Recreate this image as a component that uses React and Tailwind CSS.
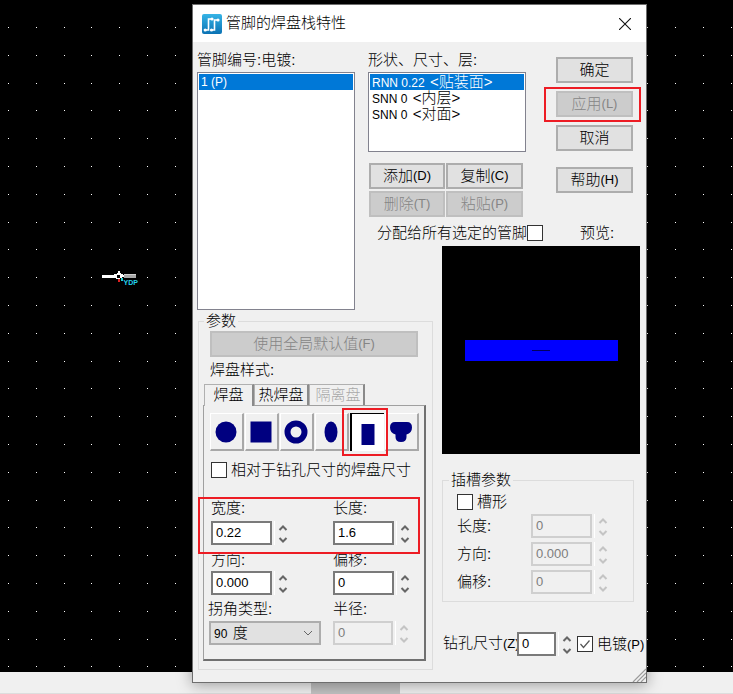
import React from "react";

const xs = Array.from({ length: 27 }, (_, i) => Math.round(8 + 27.8 * i));
const ys = Array.from({ length: 24 }, (_, i) => Math.round(27 + 27.8 * i));

function Dots() {
  return (
    <svg className="absolute inset-0" width="733" height="672" shapeRendering="crispEdges">
      {xs.map((x) => ys.map((y) => <rect key={x + "-" + y} x={x} y={y} width="1" height="1" fill="#fff" />))}
    </svg>
  );
}

function Cursor() {
  return (
    <svg className="absolute left-[100px] top-[266px]" width="40" height="22" shapeRendering="crispEdges">
      <rect x="2" y="9" width="14" height="3" fill="#fff" />
      <path d="M12 9 L18 7 L19 3 L20 7 L24 9 L24 11 L20 12 L19 17 L18 13 L14 12 Z" fill="#fff" />
      <rect x="17" y="9" width="3" height="3" fill="#000" />
      <rect x="24" y="8" width="12" height="1" fill="#d0d0d0" />
      <rect x="24" y="9" width="12" height="3" fill="#a8a8a8" />
      <rect x="18" y="13" width="2" height="3" fill="#e02020" />
      <rect x="21" y="12" width="2" height="3" fill="#20d0d0" />
      <text x="23.5" y="18.5" fontSize="7" fontWeight="700" fill="#22d3ee" fontFamily="Liberation Sans, sans-serif">YDP</text>
    </svg>
  );
}

function Btn({ children, disabled, className = "" }) {
  return (
    <div
      className={
        "flex items-center justify-center h-[26px] border-2 text-[15px] " +
        (disabled
          ? "bg-[#cccccc] border-[#bfbfbf] text-[#858585] "
          : "bg-[#e1e1e1] border-[#adadad] text-black ") +
        className
      }
    >
      {children}
    </div>
  );
}

const Key = ({ children }) => <span className="text-[13px]">{children}</span>;

function Spin({ disabled, tight }) {
  const c = disabled ? "#c4c4c4" : "#666666";
  return (
    <div className="flex h-[24px] ml-[2px]">
      <div className="w-px h-full bg-white" />
      <svg width={tight ? 14 : 16} height="24" className="block">
        <path d="M4.5 9 L8 5.5 L11.5 9" fill="none" stroke={c} strokeWidth="2" />
        <path d="M4.5 17 L8 20.5 L11.5 17" fill="none" stroke={c} strokeWidth="2" />
      </svg>
    </div>
  );
}

function Field({ value, w = "w-[61px]", disabled, tight }) {
  return (
    <div className="flex items-center">
      <div
        className={
          "h-[24px] flex items-center pl-[3px] text-[13px] border-2 " +
          w +
          (disabled
            ? " bg-[#f0f0f0] border-[#cfcfcf] text-[#7d7d7d]"
            : " bg-white border-[#7a7a7a] text-black")
        }
      >
        {value}
      </div>
      <Spin disabled={disabled} tight={tight} />
    </div>
  );
}

function Check({ checked }) {
  return (
    <div className="w-[16px] h-[16px] shrink-0 bg-white border border-[#333333] flex items-center justify-center">
      {checked && (
        <svg width="12" height="12">
          <path d="M1.5 6 L4.5 9.5 L10.5 2.5" fill="none" stroke="#555" strokeWidth="1.2" />
        </svg>
      )}
    </div>
  );
}

function Group({ label, className = "", labelLeft = "left-[6px]", children }) {
  return (
    <div className={"relative border border-[#dcdcdc] " + className}>
      <span className={"absolute -top-[11px] h-[20px] leading-[20px] px-[2px] bg-[#f0f0f0] text-[15px] " + labelLeft}>{label}</span>
      {children}
    </div>
  );
}

function PadBtn({ children, selected }) {
  return (
    <div
      className={
        "w-[34px] h-[38px] flex items-center justify-center " +
        (selected
          ? "bg-white border-t border-l-2 border-black"
          : "bg-[#f0f0f0] border-t border-l border-white border-r-2 border-b-2 border-r-[#a8a8a8] border-b-[#a8a8a8]")
      }
    >
      <svg width="26" height="26" viewBox="0 0 26 26" className={selected ? "" : "mr-[2px]"}>{children}</svg>
    </div>
  );
}

const N = "#000080";

function ListRow({ selected, children }) {
  return (
    <div className={"h-[16px] leading-[16px] pl-[2px] text-[12px] whitespace-nowrap " + (selected ? "bg-[#0078d7] text-white" : "text-black")}>
      {children}
    </div>
  );
}

const Z = ({ children }) => <span className="text-[15px] ml-[2px]">{children}</span>;

function TitleIcon() {
  return (
    <svg width="20" height="20" viewBox="0 0 20 20" className="shrink-0">
      <defs>
        <linearGradient id="g" x1="0" y1="0" x2="0" y2="1">
          <stop offset="0" stopColor="#36b4e6" />
          <stop offset="1" stopColor="#0b72b4" />
        </linearGradient>
      </defs>
      <rect width="20" height="20" rx="2" fill="url(#g)" />
      <path d="M3 16 H6.5 V5 H10" fill="none" stroke="#fff" strokeWidth="1.6" />
      <path d="M9.5 16 H12.5 V6 H16" fill="none" stroke="#fff" strokeWidth="1.6" />
      <circle cx="3.2" cy="16" r="1.6" fill="#fff" />
      <circle cx="9.5" cy="16" r="1.6" fill="#fff" />
      <circle cx="10" cy="5" r="1.6" fill="#fff" />
      <circle cx="16" cy="6" r="1.6" fill="#fff" />
    </svg>
  );
}

function Tab({ children, active, muted, className = "" }) {
  return (
    <div
      className={
        "h-[21px] flex items-center justify-center text-[15px] border-t border-l border-r-2 border-[#b0b0b0] border-r-[#8a8a8a] " +
        (muted ? "text-[#a8a8a8] " : "text-black ") +
        (active ? "h-[22px] -mb-px relative bg-[#f0f0f0] " : "") +
        className
      }
    >
      {children}
    </div>
  );
}

export default function App() {
  return (
    <div className="relative w-[733px] h-[694px] overflow-hidden flex flex-col bg-black text-black font-light font-['Liberation_Sans','Noto_Sans_CJK_SC',sans-serif]">
      <div className="relative flex-1 bg-black">
        <Dots />
        <Cursor />
      </div>
      <div className="relative h-[22px] bg-[#f0f0f0] border-b border-[#dddddd]">
        <div className="absolute left-[311px] top-[10px] w-[89px] h-[12px] bg-[#c2c2c2]" />
      </div>

      {/* dialog window */}
      <div className="absolute left-[192px] top-[4px] w-[455px] h-[679px] flex flex-col bg-[#f0f0f0] border border-[#6e6e6e] shadow-[0_2px_14px_rgba(0,0,0,0.35)]">
        <div className="h-[37px] shrink-0 bg-white flex items-center pl-[9px] pr-[15px] gap-[4px]">
          <TitleIcon />
          <span className="text-[15px] flex-1">管脚的焊盘栈特性</span>
          <svg width="12" height="12" viewBox="0 0 12 12">
            <path d="M0 0 L12 12 M12 0 L0 12" stroke="#111" strokeWidth="1.1" />
          </svg>
        </div>

        <div className="flex-1 pl-[4px] pt-[8px] grid grid-cols-[171px_74px_1fr] grid-rows-[196px_75px_1fr]">
          {/* pin list */}
          <div className="row-span-2 flex flex-col">
            <div className="h-[22px] leading-[20px] text-[15px]">管脚编号:电镀:</div>
            <div className="w-[158px] h-[238px] bg-white border border-[#82828e] p-px">
              <ListRow selected>1 (P)</ListRow>
            </div>
          </div>

          {/* shapes, commands */}
          <div className="col-span-2 flex flex-col">
            <div className="flex">
              <div className="w-[158px] flex flex-col">
                <div className="h-[22px] leading-[20px] text-[15px] whitespace-nowrap">形状、尺寸、层:</div>
                <div className="h-[80px] bg-white border border-[#82828e] p-px">
                  <ListRow selected>RNN 0.22 <Z>&lt;贴装面&gt;</Z></ListRow>
                  <ListRow>SNN 0 <Z>&lt;内层&gt;</Z></ListRow>
                  <ListRow>SNN 0 <Z>&lt;对面&gt;</Z></ListRow>
                </div>
                <div className="mt-[11px] ml-px grid grid-cols-[76px_77px] gap-x-px gap-y-[2px]">
                  <Btn>添加<Key>(D)</Key></Btn>
                  <Btn>复制<Key>(C)</Key></Btn>
                  <Btn disabled>删除<Key>(T)</Key></Btn>
                  <Btn disabled>粘贴<Key>(P)</Key></Btn>
                </div>
              </div>
              <div className="ml-[30px] mt-[7px] w-[77px] flex flex-col gap-[8px]">
                <Btn>确定</Btn>
                <Btn disabled>应用<Key>(L)</Key></Btn>
                <Btn>取消</Btn>
                <Btn className="mt-[8px]">帮助<Key>(H)</Key></Btn>
              </div>
            </div>
            <div className="mt-[8px] flex items-center h-[16px] pl-[9px] text-[15px] whitespace-nowrap">
              <span>分配给所有选定的管脚</span>
              <Check />
              <span className="ml-[37px]">预览:</span>
            </div>
          </div>

          {/* preview + slot + drill */}
          <div className="col-start-3 row-start-2 row-span-2 flex flex-col items-start">
            <div className="w-[198px] h-[208px] bg-black flex items-center justify-center">
              <div className="w-[153px] h-[21px] bg-[#0000ff] flex items-center justify-center">
                <div className="w-[18px] h-px bg-[#000060]" />
              </div>
            </div>
            <Group label="插槽参数" className="mt-[26px] w-[192px] h-[122px] pt-[13px] pl-[14px] text-[15px]">
              <div className="flex items-center gap-[4px] h-[16px]">
                <Check />
                <span>槽形</span>
              </div>
              <div className="mt-[4px] flex flex-col gap-[4px]">
                {[["长度:", "0"], ["方向:", "0.000"], ["偏移:", "0"]].map(([l, v]) => (
                  <div key={l} className="flex items-center">
                    <span className="w-[74px]">{l}</span>
                    <Field value={v} disabled />
                  </div>
                ))}
              </div>
            </Group>
            <div className="mt-[30px] ml-px flex items-center text-[15px] whitespace-nowrap">
              <span className="w-[74px] -mt-[2px]">钻孔尺寸<Key>(Z)</Key></span>
              <Field value="0" w="w-[39px]" tight />
              <div className="ml-[4px] mr-[4px]"><Check checked /></div>
              <span>电镀<Key>(P)</Key></span>
            </div>
          </div>

          {/* parameters */}
          <div className="col-start-1 col-span-2 row-start-3 ml-px">
            <Group label="参数" labelLeft="left-[5px]" className="w-[235px] h-[349px] pt-[9px] pl-[11px]">
              <Btn disabled className="w-[208px]">使用全局默认值<Key>(F)</Key></Btn>
              <div className="mt-[3px] h-[20px] leading-[20px] text-[15px]">焊盘样式:</div>
              <div className="mt-[4px] -ml-[6px] flex">
                <Tab active className="w-[50px]">焊盘</Tab>
                <Tab className="w-[55px]">热焊盘</Tab>
                <Tab muted className="w-[56px] pl-[3px]">隔离盘</Tab>
              </div>
              <div className="-ml-[7px] w-[223px] h-[256px] border-t border-l border-[#a0a0a0] border-r-2 border-b-2 border-r-[#707070] border-b-[#707070] pt-[7px] pl-[6px]">
                <div className="flex gap-px">
                  <PadBtn><circle cx="13" cy="13" r="10.5" fill={N} /></PadBtn>
                  <PadBtn><rect x="2.5" y="2.5" width="21" height="21" fill={N} /></PadBtn>
                  <PadBtn><circle cx="13" cy="13" r="8.5" fill="none" stroke={N} strokeWidth="6" /></PadBtn>
                  <PadBtn><ellipse cx="13" cy="13" rx="6.5" ry="10.5" fill={N} /></PadBtn>
                  <PadBtn selected><rect x="6.5" y="4" width="13" height="21" fill={N} /></PadBtn>
                  <PadBtn>
                    <path d="M7 3 H19 Q24 3 24 8.5 Q24 14 18.5 15.5 V18 Q18.5 23 13 23 Q7.5 23 7.5 18 V15.5 Q2 14 2 8.5 Q2 3 7 3 Z" fill={N} />
                  </PadBtn>
                </div>
                <div className="mt-[11px] h-[16px] flex items-center gap-[4px] text-[15px] ml-px whitespace-nowrap">
                  <Check />
                  <span>相对于钻孔尺寸的焊盘尺寸</span>
                </div>
                <div className="mt-[20px] ml-px grid grid-cols-[122px_1fr] text-[15px]">
                  <div>
                    <div className="h-[23px] leading-[20px]">宽度:</div>
                    <Field value="0.22" />
                  </div>
                  <div>
                    <div className="h-[23px] leading-[20px]">长度:</div>
                    <Field value="1.6" />
                  </div>
                  <div>
                    <div className="h-[26px] pt-[5px] leading-[20px]">方向:</div>
                    <Field value="0.000" />
                  </div>
                  <div>
                    <div className="h-[26px] pt-[5px] leading-[20px]">偏移:</div>
                    <Field value="0" />
                  </div>
                  <div>
                    <div className="h-[26px] pt-[4px] -ml-[3px] leading-[20px]">拐角类型:</div>
                    <div className="-ml-[2px] w-[112px] h-[24px] bg-[#e1e1e1] border-2 border-[#adadad] flex items-center justify-between pl-[3px] pr-[6px]">
                      <span className="text-[12px]">90 <Z>度</Z></span>
                      <svg width="10" height="6"><path d="M1 1 L5 5 L9 1" fill="none" stroke="#666" /></svg>
                    </div>
                  </div>
                  <div>
                    <div className="h-[26px] pt-[4px] leading-[20px]">半径:</div>
                    <Field value="0" w="w-[60px]" disabled />
                  </div>
                </div>
              </div>
            </Group>
          </div>
        </div>

        {/* size grip */}
        <svg className="absolute right-0 bottom-0" width="14" height="14">
          <path d="M14 1 L1 14 M14 5 L5 14 M14 9 L9 14" stroke="#9a9a9a" strokeWidth="1.2" />
        </svg>
      </div>

      {/* red annotation boxes */}
      <div className="absolute left-[544px] top-[87px] w-[97px] h-[35px] border-2 border-[#ed1c24]" />
      <div className="absolute left-[342px] top-[408px] w-[46px] h-[48px] border-2 border-[#ed1c24]" />
      <div className="absolute left-[198px] top-[497px] w-[222px] h-[57px] border-2 border-[#ed1c24]" />
    </div>
  );
}
